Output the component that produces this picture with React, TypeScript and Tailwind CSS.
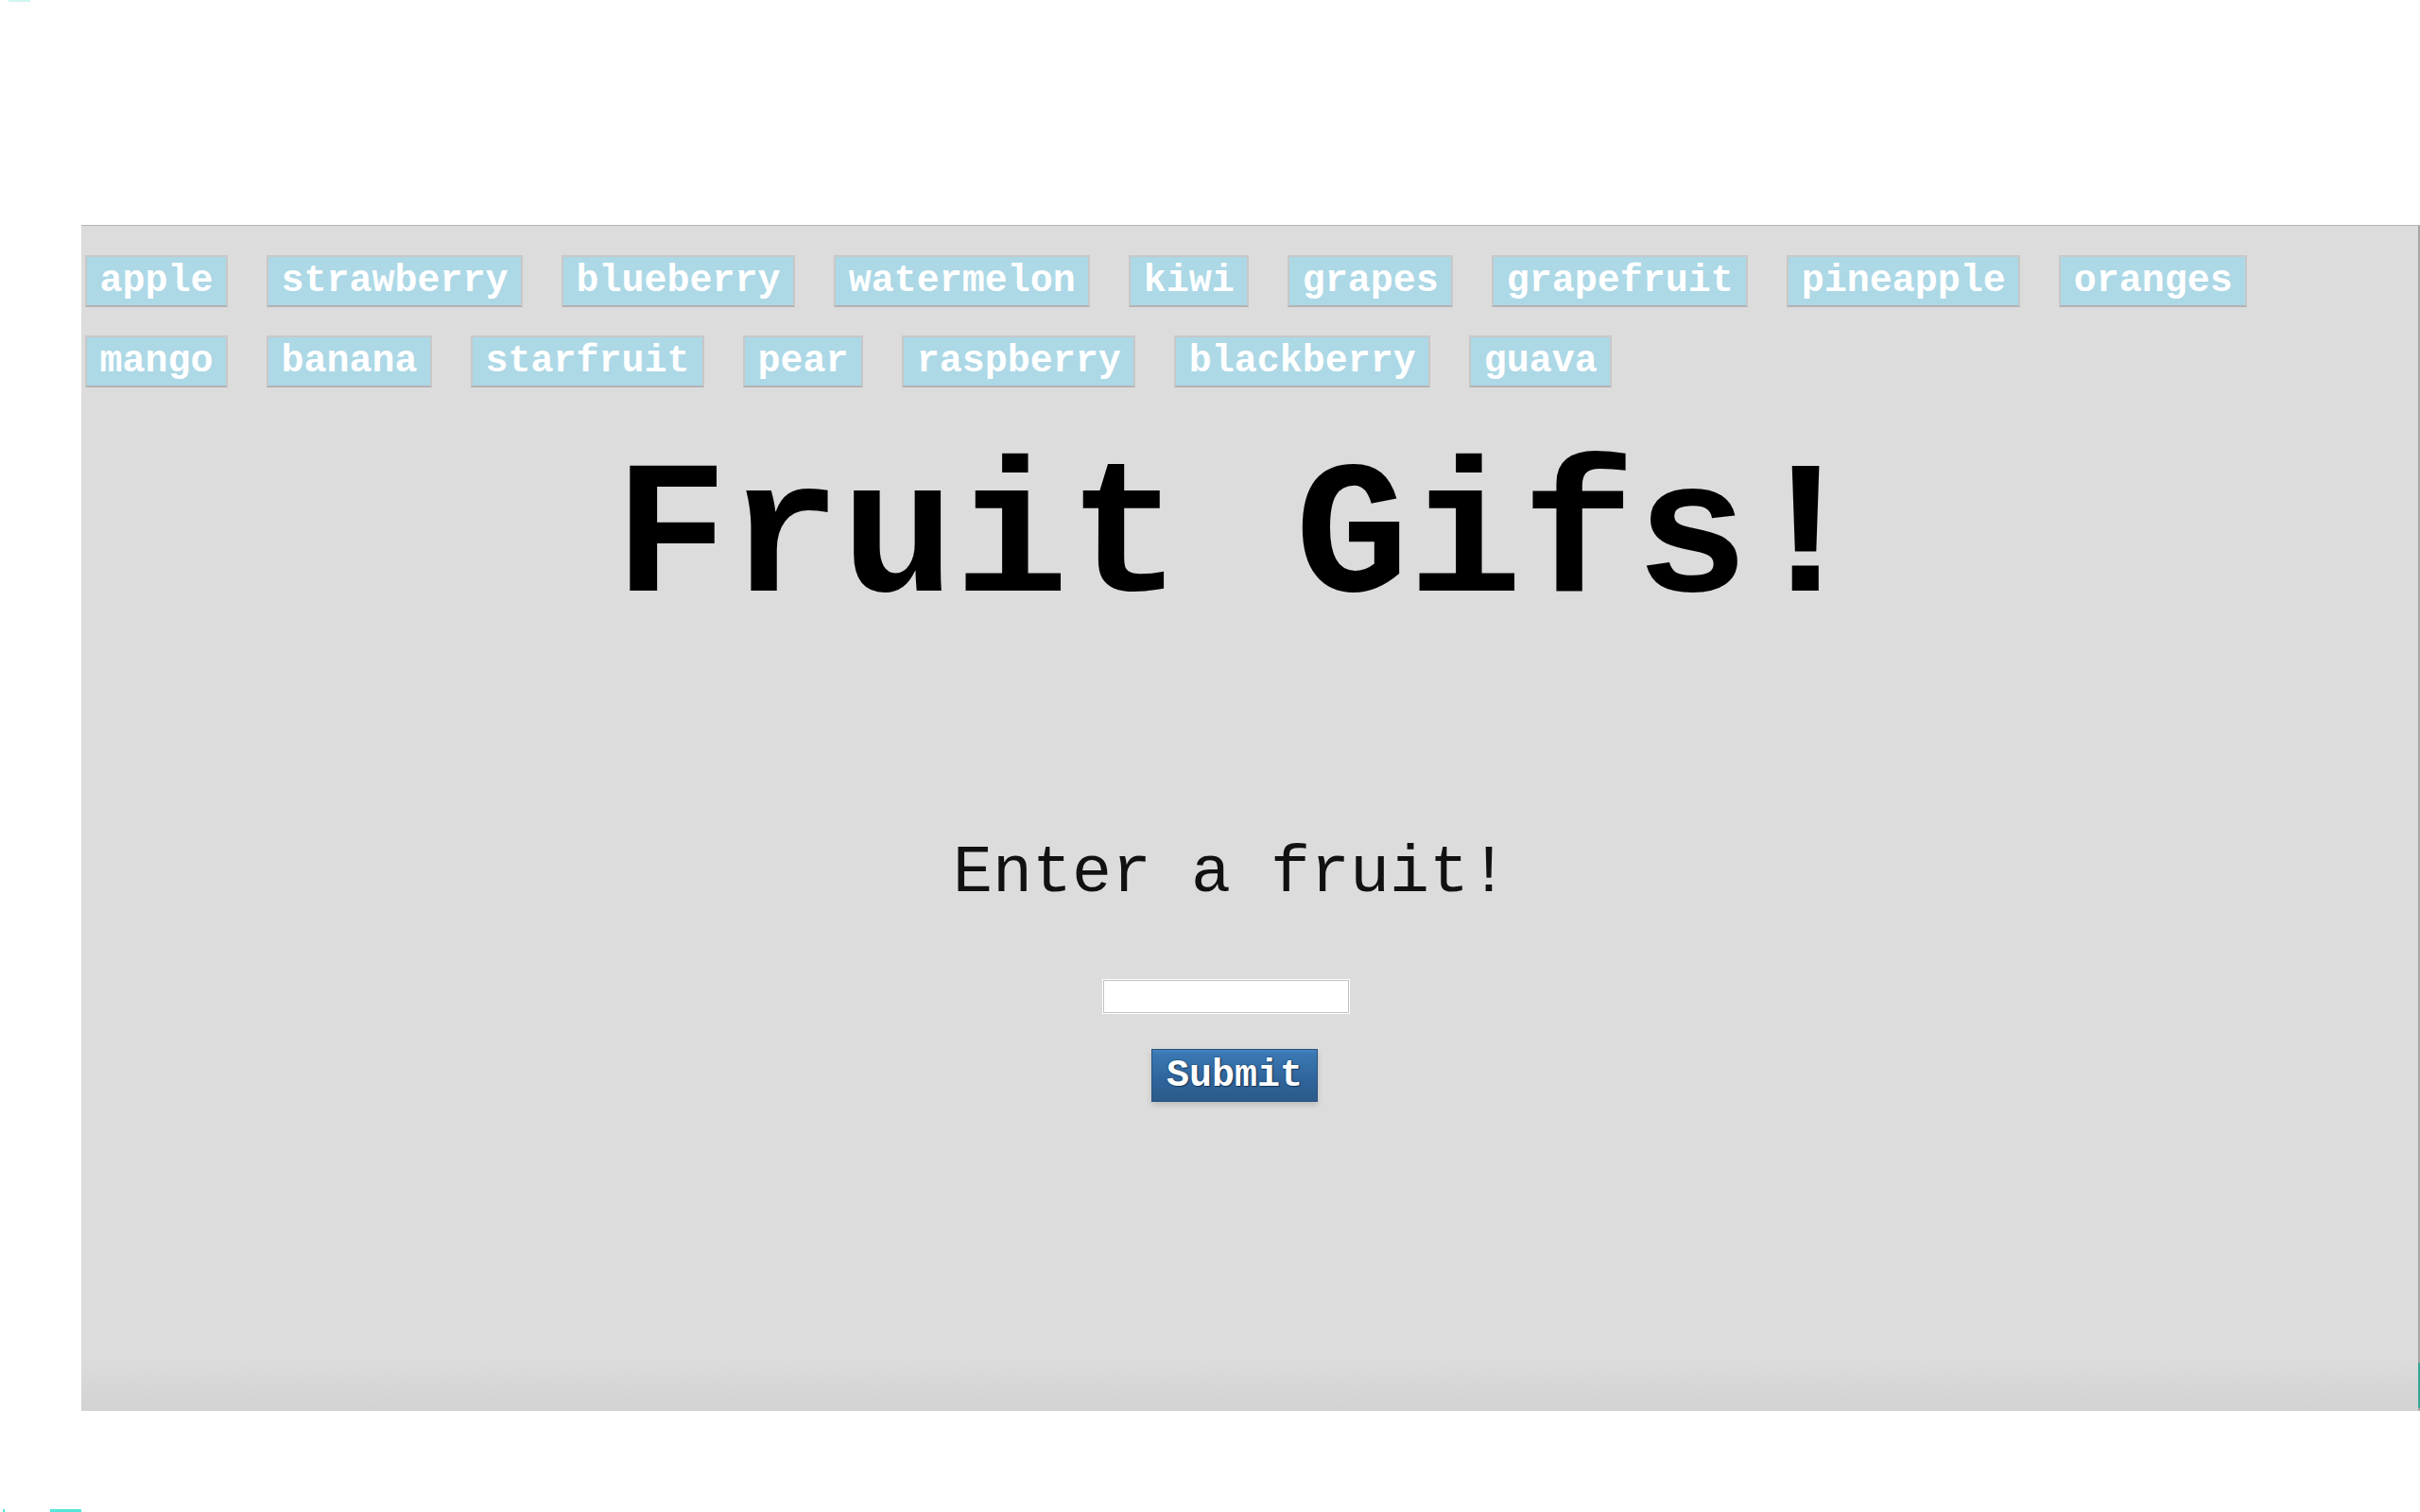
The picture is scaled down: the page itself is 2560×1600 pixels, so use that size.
import React from "react";

const row1 = ["apple", "strawberry", "blueberry", "watermelon", "kiwi", "grapes", "grapefruit", "pineapple", "oranges"];
const row2 = ["mango", "banana", "starfruit", "pear", "raspberry", "blackberry", "guava"];

function FruitButton({ name }: { name: string }) {
  return (
    <button
      type="button"
      className="bg-[#add8e6] text-white font-bold text-[40px] leading-[45px] px-[13.5px] py-[3px] border-2 border-[#c8c8c8] border-b-[#b2b2b2] cursor-pointer"
      style={{ fontFamily: '"Liberation Mono", "Courier New", monospace' }}
    >
      {name}
    </button>
  );
}

export default function App() {
  return (
    <div
      className="w-[2560px] h-[1600px] bg-white flex flex-col overflow-hidden"
      style={{ fontFamily: '"Liberation Mono", "Courier New", monospace' }}
    >
      <div className="h-[238px] shrink-0">
        <div className="ml-[9px] w-[23px] h-[2px] bg-[#cdf6ef]" />
      </div>

      <div className="ml-[86px] h-[1255px] shrink-0 flex border-t border-[#b4b4b4] bg-[linear-gradient(to_bottom,#dcdcdc_0%,#dcdcdc_95.5%,#d2d2d2_100%)]">
        <div className="flex-1 flex flex-col">
          <div className="pt-[31px] pl-[4px] flex flex-col gap-y-[30px]">
            <div className="flex gap-x-[41px]">
              {row1.map((f) => (
                <FruitButton key={f} name={f} />
              ))}
            </div>
            <div className="flex gap-x-[41px]">
              {row2.map((f) => (
                <FruitButton key={f} name={f} />
              ))}
            </div>
          </div>

          <div className="flex flex-col items-center pr-[36px]">
            <h1 className="mt-[49px] ml-[12px] text-[200px] leading-[226px] font-bold text-black whitespace-pre">
              Fruit Gifs!
            </h1>
            <p className="mt-[200px] mr-[4px] text-[70px] leading-[79px] text-[#111111] whitespace-pre">
              Enter a fruit!
            </p>
            <input
              type="text"
              className="mt-[73px] mr-[14px] w-[260px] h-[35px] bg-white border border-[#c2c2c2] shadow-[0_0_0_1px_#ffffff] outline-none"
            />
            <button
              type="button"
              className="mt-[38px] ml-[4px] w-[176px] h-[56px] flex items-center justify-center border border-[#28517e] bg-[linear-gradient(to_bottom,#4484c0_0%,#3a78b2_8%,#2f649a_60%,#2b5b8b_100%)] text-white font-bold text-[40px] leading-[45px] [text-shadow:0_0_2px_#17375a,1px_1px_1px_#17375a] shadow-[0_3px_6px_rgba(0,0,0,0.15)]"
            >
              Submit
            </button>
          </div>
        </div>
        <div className="w-[2px] flex flex-col">
          <div className="flex-1 bg-[#a6a6a6]" />
          <div className="h-[48px] bg-[#3aa597]" />
          <div className="h-[3px] bg-[#a6a6a6]" />
        </div>
      </div>

      <div className="flex-1 flex items-end">
        <div className="ml-[3px] w-[2px] h-[3px] bg-[#55e6d9]" />
        <div className="ml-[48px] w-[33px] h-[3px] bg-[#55e6d9]" />
      </div>
    </div>
  );
}
